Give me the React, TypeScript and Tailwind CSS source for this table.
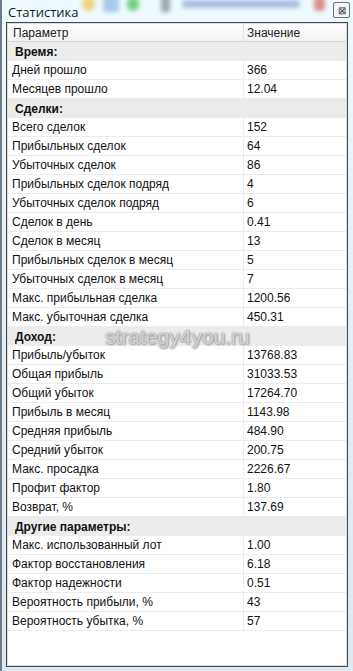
import React from "react";

type Row = { label: string; value?: string; section?: boolean };

const rows: Row[] = [
  { label: "Время:", section: true },
  { label: "Дней прошло", value: "366" },
  { label: "Месяцев прошло", value: "12.04" },
  { label: "Сделки:", section: true },
  { label: "Всего сделок", value: "152" },
  { label: "Прибыльных сделок", value: "64" },
  { label: "Убыточных сделок", value: "86" },
  { label: "Прибыльных сделок подряд", value: "4" },
  { label: "Убыточных сделок подряд", value: "6" },
  { label: "Сделок в день", value: "0.41" },
  { label: "Сделок в месяц", value: "13" },
  { label: "Прибыльных сделок в месяц", value: "5" },
  { label: "Убыточных сделок в месяц", value: "7" },
  { label: "Макс. прибыльная сделка", value: "1200.56" },
  { label: "Макс. убыточная сделка", value: "450.31" },
  { label: "Доход:", section: true },
  { label: "Прибыль/убыток", value: "13768.83" },
  { label: "Общая прибыль", value: "31033.53" },
  { label: "Общий убыток", value: "17264.70" },
  { label: "Прибыль в месяц", value: "1143.98" },
  { label: "Средняя прибыль", value: "484.90" },
  { label: "Средний убыток", value: "200.75" },
  { label: "Макс. просадка", value: "2226.67" },
  { label: "Профит фактор", value: "1.80" },
  { label: "Возврат, %", value: "137.69" },
  { label: "Другие параметры:", section: true },
  { label: "Макс. использованный лот", value: "1.00" },
  { label: "Фактор восстановления", value: "6.18" },
  { label: "Фактор надежности", value: "0.51" },
  { label: "Вероятность прибыли, %", value: "43" },
  { label: "Вероятность убытка, %", value: "57" },
];

const StatRow = ({ row }: { row: Row }) =>
  row.section ? (
    <div className="flex h-[19px] items-center bg-[#ececec] pl-[7px] font-bold text-[#111]">
      {row.label}
    </div>
  ) : (
    <div className="flex h-[19px] border-b border-[#ececec]">
      <div className="flex w-[236px] items-center border-r border-[#ececec] pl-[4px]">{row.label}</div>
      <div className="flex flex-1 items-center pl-[3px]">{row.value}</div>
    </div>
  );

export default function App() {
  return (
    <div className="relative h-[671px] w-[353px] overflow-hidden border-l-2 border-[#6f7c88] bg-gradient-to-b from-[#eefafd] via-[#e4eef6] to-[#dde8f1] text-[#111]">
      {/* blurred toolbar behind the glass title */}
      <div className="absolute left-[80px] top-[-4px] flex items-center gap-[8px] blur-[2px]">
        <div className="h-[14px] w-[13px] rounded-full bg-[#f0d27e]" />
        <div className="h-[15px] w-[16px] rounded bg-[#a8c8ec]" />
        <div className="h-[14px] w-[12px] rounded-full bg-[#72d283]" />
        <div className="ml-[14px] h-[16px] w-[9px] bg-[#9ea8b2]" />
        <div className="ml-[4px] h-[8px] w-[118px] rounded bg-[#a9bbe0]" />
        <div className="ml-[6px] h-[14px] w-[11px] rounded bg-[#de8c8c]" />
      </div>

      <div className="relative flex h-[22px] items-start">
        <span
          className="pl-[6px] pt-[3px] text-[13px] text-[#1a1a1a]"
          style={{ fontFamily: '"Open Sans", "Liberation Sans", sans-serif' }}
        >
          Статистика
        </span>
        <div className="absolute right-[3px] top-[2px] flex h-[16px] w-[17px] items-center justify-center rounded-[2px] border border-[#707070] bg-[#f4f7fa] text-[10px] leading-none text-[#333]">
          ⊠
        </div>
      </div>

      <div
        className="relative ml-[4px] h-[645px] w-[342px] border border-[#4a4a4a] bg-white text-[12px]"
        style={{ fontFamily: '"Liberation Sans", Arial, sans-serif' }}
      >
        <div className="h-full border border-[#dcdcdc]">
          <div className="flex h-[18px] border-b border-[#d6d6d6] bg-gradient-to-b from-[#ffffff] to-[#f1f1f1] text-[#222]">
            <div className="flex w-[236px] items-center border-r border-[#e2e2e2] pl-[5px]">Параметр</div>
            <div className="flex flex-1 items-center pl-[3px]">Значение</div>
          </div>
          {rows.map((row, i) => (
            <StatRow key={i} row={row} />
          ))}
        </div>

        <div
          className="pointer-events-none absolute left-[98px] top-[298px] text-[21px] text-[#d4d4d4]"
          style={{ textShadow: "0 0 2px #7a7a7a, 1px 1px 2px #a8a8a8" }}
        >
          strategy4you.ru
        </div>
      </div>
    </div>
  );
}
